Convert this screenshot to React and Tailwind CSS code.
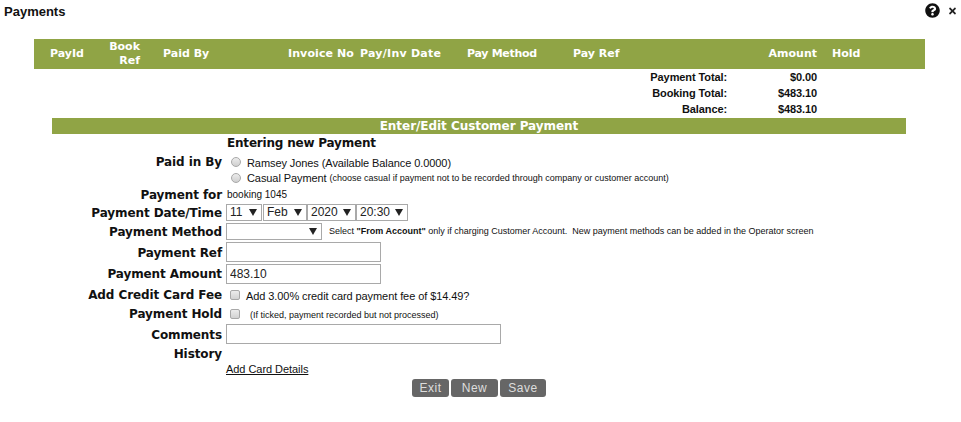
import React from 'react'
import { FaQuestionCircle, FaTimes } from 'react-icons/fa'

const verdana = "font-['DejaVu_Sans',Verdana,sans-serif] font-bold"
const radioBox = 'ml-[5px] h-[10px] w-[10px] appearance-none rounded-full border border-[#a8a8a8] bg-gradient-to-b from-[#ececec] to-[#cfcfcf]'
const checkBox = 'ml-1 h-[10px] w-[10px] appearance-none rounded-[2px] border border-[#a8a8a8] bg-gradient-to-b from-[#ececec] to-[#d2d2d2]'

const FormRow = ({ label, className = '', labelClass = '', children }) => (
  <div className={`flex items-center ${className}`}>
    <div className={`w-[222px] shrink-0 text-right text-[12px] leading-[16px] tracking-[-0.1px] text-[#111] ${verdana} ${labelClass}`}>{label}</div>
    <div className="ml-1 flex flex-1 items-center">{children}</div>
  </div>
)

const Select = ({ value, className = '' }) => (
  <div className={`relative h-[17px] ${className}`}>
    <select
      defaultValue={value}
      className="block h-full w-full appearance-none border border-[#a9a9a9] bg-white pl-[3px] text-[12px] leading-[15px] text-[#222]"
    >
      <option>{value}</option>
    </select>
    <svg viewBox="0 0 8 7" className="pointer-events-none absolute right-[5px] top-[5px] h-[7px] w-[8px] text-[#222]">
      <path d="M0 0h8L4 7z" fill="currentColor" />
    </svg>
  </div>
)

const App = () => {
  return (
    <div className="h-[422px] w-[961px] overflow-hidden bg-white font-['Liberation_Sans',Arial,sans-serif] text-[#111]">
      {/* Title bar */}
      <div className="flex h-[39px] items-start justify-between pl-1 pr-1 pt-[3px]">
        <h1 className="mt-px text-[13px] leading-[16px] font-bold">Payments</h1>
        <div className="flex items-center gap-2">
          <FaQuestionCircle className="h-[15px] w-[15px] text-[#111]" />
          <FaTimes className="h-[10px] w-[9px] text-[#222]" />
        </div>
      </div>

      {/* Payments table */}
      <div className={`mx-[34px] flex h-[30px] w-[891px] items-center bg-[#90a445] text-[11px] leading-[14px] text-white ${verdana}`}>
        <div className="ml-4 w-[40px]">PayId</div>
        <div className="w-[50px] text-right">Book<br />Ref</div>
        <div className="ml-[23px] w-[125px]">Paid By</div>
        <div className="w-[72px] tracking-[0.1px]">Invoice No</div>
        <div className="w-[107px] tracking-[0.25px]">Pay/Inv Date</div>
        <div className="w-[106px] tracking-[-0.3px]">Pay Method</div>
        <div className="w-[186px]">Pay Ref</div>
        <div className="w-[58px] text-right">Amount</div>
        <div className="ml-[15px]">Hold</div>
      </div>

      <div className="h-[49px] text-[11px] leading-[16px] font-bold tracking-[-0.1px]">
        {[['Payment Total:', '$0.00'], ['Booking Total:', '$483.10'], ['Balance:', '$483.10']].map(([label, amount]) => (
          <div key={label} className="flex">
            <div className="w-[727px] text-right">{label}</div>
            <div className="w-[90px] text-right">{amount}</div>
          </div>
        ))}
      </div>

      {/* Edit form */}
      <div className={`mx-[52px] h-[16px] w-[854px] bg-[#90a445] text-center text-[12px] leading-[16px] tracking-[-0.05px] text-white ${verdana}`}>
        Enter/Edit Customer Payment
      </div>

      <div className={`ml-[227px] h-[19px] text-[12px] leading-[19px] tracking-[-0.2px] text-[#111] ${verdana}`}>Entering new Payment</div>

      <FormRow label="Paid in By" className="h-[17px]">
        <input type="radio" name="paidby" className={radioBox} />
        <span className="ml-[6px] mt-[3px] text-[11px] tracking-[-0.08px]">Ramsey Jones (Available Balance 0.0000)</span>
      </FormRow>
      <div className="ml-[226px] flex h-[17px] items-center">
        <input type="radio" name="paidby" className={`${radioBox} mb-[2px]`} />
        <span className="ml-[6px] text-[11px] tracking-[-0.08px]">Casual Payment</span>
        <span className="ml-[3px] text-[9px]">(choose casual if payment not to be recorded through company or customer account)</span>
      </div>
      <FormRow label="Payment for" className="h-[16px]">
        <span className="ml-px -mt-[2px] text-[10px]">booking 1045</span>
      </FormRow>
      <FormRow label="Payment Date/Time" className="h-[19px]">
        <Select value="11" className="w-[36px]" />
        <Select value="Feb" className="ml-px w-[44px]" />
        <Select value="2020" className="w-[49px]" />
        <Select value="20:30" className="w-[52px]" />
      </FormRow>
      <FormRow label="Payment Method" className="h-[18px] pt-px" labelClass="mt-px">
        <Select value="" className="w-[96px]" />
        <span className="ml-[7px] text-[9px]">
          Select <b>"From Account"</b> only if charging Customer Account.&nbsp; New payment methods can be added in the Operator screen
        </span>
      </FormRow>
      <FormRow label="Payment Ref" className="mt-[1px] h-[22px]" labelClass="mt-[2px]">
        <input className="h-[20px] w-[155px] border border-[#a9a9a9]" />
      </FormRow>
      <FormRow label="Payment Amount" className="h-[22px]">
        <input defaultValue="483.10" className="h-[20px] w-[155px] border border-[#a9a9a9] px-[3px] text-[12px] text-[#222]" />
      </FormRow>
      <FormRow label="Add Credit Card Fee" className="h-[20px]">
        <input type="checkbox" className={checkBox} />
        <span className="ml-[6px] mt-[3px] text-[11px] tracking-[-0.08px]">Add 3.00% credit card payment fee of $14.49?</span>
      </FormRow>
      <FormRow label="Payment Hold" className="h-[17px]">
        <input type="checkbox" className={checkBox} />
        <span className="ml-[10px] mt-[4px] text-[9px]">(If ticked, payment recorded but not processed)</span>
      </FormRow>
      <FormRow label="Comments" className="mt-[1px] h-[22px]" labelClass="mt-[2px]">
        <input className="h-[20px] w-[275px] border border-[#a9a9a9]" />
      </FormRow>
      <FormRow label="History" className="h-[17px]" />
      <div className="ml-[226px] h-[14px] text-[11px] leading-[15px] tracking-[-0.05px]">
        <a href="#" className="underline">Add Card Details</a>
      </div>

      <div className="ml-[412px] mt-[3px] flex gap-[2px] text-[12px] tracking-[0.5px] text-[#ddd]">
        <button className="h-[18px] w-[37px] rounded-[3px] bg-[#666]">Exit</button>
        <button className="h-[18px] w-[47px] rounded-[3px] bg-[#666]">New</button>
        <button className="h-[18px] w-[46px] rounded-[3px] bg-[#666]">Save</button>
      </div>
    </div>
  )
}

export default App
